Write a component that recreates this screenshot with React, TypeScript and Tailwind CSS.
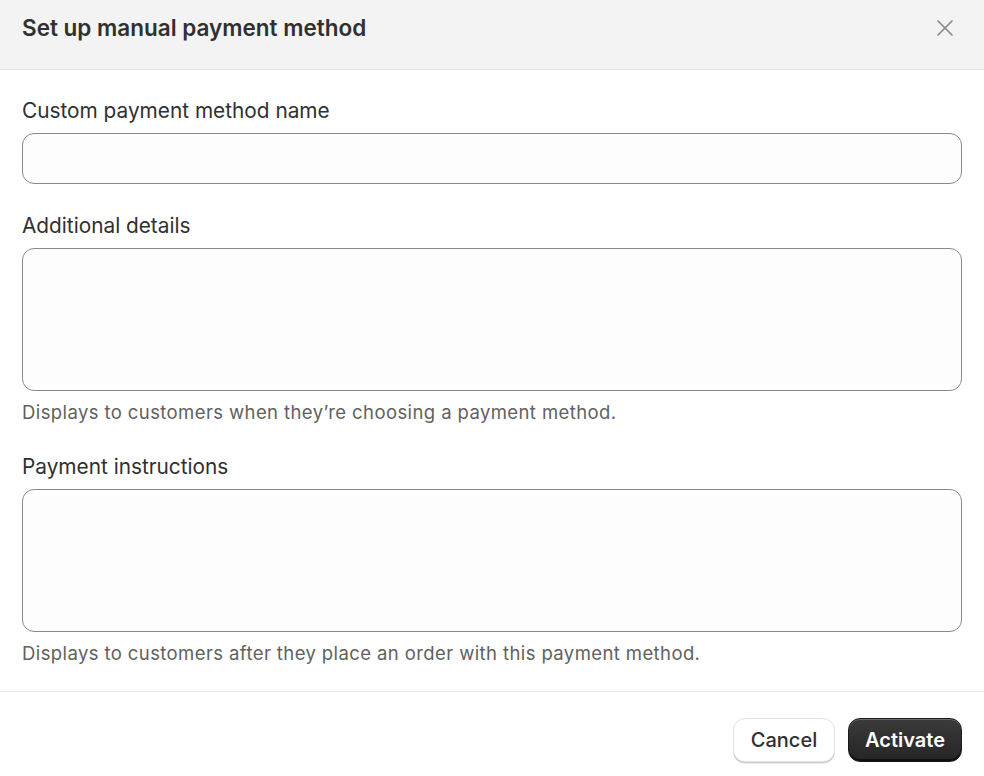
import { X } from 'lucide-react';

function Field({ label, help, multiline }: { label: string; help?: string; multiline?: boolean }) {
    return (
        <div className="flex flex-col">
            <label className="text-[20.8px] leading-[24px] text-[#303030] mb-[10px]">{label}</label>
            {multiline ? (
                <textarea className="h-[143px] w-full resize-none rounded-[12px] border border-[#8a8a8a] bg-[#fdfdfd] outline-none" />
            ) : (
                <input className="h-[51px] w-full rounded-[12px] border border-[#8a8a8a] bg-[#fdfdfd] outline-none" />
            )}
            {help && <p className="mt-[10px] mb-[2px] text-[18.5px] leading-[22px] tracking-[0.4px] text-[#616161]">{help}</p>}
        </div>
    );
}

export default function App() {
    return (
        <div className="w-[984px] h-[776px] bg-white overflow-hidden font-['Inter',sans-serif]">
            {/* Header */}
            <div className="h-[70px] bg-[#f3f3f3] border-b border-[#e3e3e3] flex items-start justify-between pl-[22px] pr-[25px] pt-[14px]">
                <h2 className="text-[22.5px] leading-[28px] font-semibold text-[#303030]">Set up manual payment method</h2>
                <X className="w-[28px] h-[28px] text-[#8a8a8a]" strokeWidth={1.5} />
            </div>

            {/* Body */}
            <div className="px-[22px] pt-[29px] pb-[25px] flex flex-col gap-[30px] border-b border-[#ebebeb]">
                <Field label="Custom payment method name" />
                <Field label="Additional details" multiline help="Displays to customers when they’re choosing a payment method." />
                <Field label="Payment instructions" multiline help="Displays to customers after they place an order with this payment method." />
            </div>

            {/* Footer */}
            <div className="flex justify-end gap-[13px] px-[22px] pt-[26px]">
                <button className="h-[44px] w-[102px] rounded-[12px] bg-white border border-[#e3e3e3] shadow-[0_1.5px_0_#cfcfcf] text-[20px] font-medium text-[#303030]">
                    Cancel
                </button>
                <button className="h-[44px] w-[114px] rounded-[12px] bg-gradient-to-b from-[#3a3a3a] to-[#262626] border border-[#1a1a1a] shadow-[inset_0_1px_0_rgba(255,255,255,0.25),inset_0_-2px_0_rgba(0,0,0,0.6)] text-[20px] font-semibold text-white">
                    Activate
                </button>
            </div>
        </div>
    );
}
